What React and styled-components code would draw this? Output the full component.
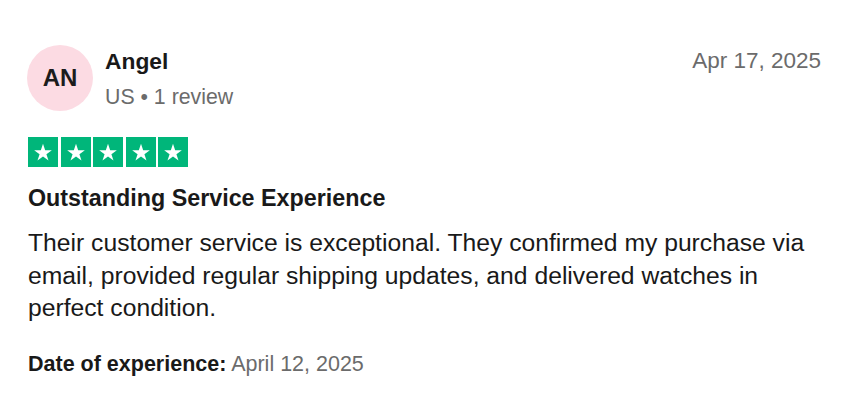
import styled, { createGlobalStyle } from "styled-components";

const GlobalStyle = createGlobalStyle`
  body {
    margin: 0;
    background: #ffffff;
    font-family: "Liberation Sans", Arial, sans-serif;
    color: #191919;
  }
`;

const Card = styled.article`
  width: 852px;
  height: 400px;
  box-sizing: border-box;
  padding: 45px 31px 0 28px;
  display: flex;
  flex-direction: column;
`;

const Header = styled.header`
  display: flex;
  align-items: flex-start;
`;

const Avatar = styled.div`
  width: 66px;
  height: 66px;
  margin-left: -1px;
  border-radius: 50%;
  background: #fcdbe3;
  display: flex;
  align-items: center;
  justify-content: center;
  font-size: 24px;
  font-weight: 700;
  color: #1c1c1c;
  flex-shrink: 0;
`;

const Author = styled.div`
  margin-left: 12px;
  flex: 1;
  display: flex;
  flex-direction: column;
`;

const Name = styled.div`
  font-size: 22.8px;
  font-weight: 700;
  line-height: 30px;
  margin-top: 1px;
`;

const Meta = styled.div`
  font-size: 21.3px;
  color: #6b6b6b;
  line-height: 26px;
  margin-top: 8px;
`;

const DateText = styled.time`
  font-size: 22.5px;
  color: #6b6b6b;
  line-height: 30px;
  margin-top: 1px;
`;

const Stars = styled.div`
  display: flex;
  gap: 2.5px;
  margin-top: 26px;
`;

const StarBox = styled.div`
  width: 30px;
  height: 30px;
  background: #00b67a;
  display: flex;
  align-items: center;
  justify-content: center;
`;

const Title = styled.h2`
  margin: 16px 0 0;
  font-size: 23.3px;
  font-weight: 700;
  line-height: 30px;
`;

const Body = styled.p`
  margin: 14px 0 0;
  font-size: 24.7px;
  line-height: 32.5px;
  max-width: 790px;
`;

const Experience = styled.p`
  margin: 26px 0 0;
  font-size: 21.5px;
  line-height: 26px;
  color: #6b6b6b;

  strong {
    color: #191919;
    font-weight: 700;
  }
`;

const Star = () => (
  <StarBox>
    <svg width="20" height="20" viewBox="0 0 24 24">
      <path
        d="M12 2.2l2.6 7.6h8l-6.5 4.8 2.5 7.6L12 17.5l-6.6 4.7 2.5-7.6-6.5-4.8h8z"
        fill="#ffffff"
      />
    </svg>
  </StarBox>
);

const App = () => {
  return (
    <>
      <GlobalStyle />
      <Card>
        <Header>
          <Avatar>AN</Avatar>
          <Author>
            <Name>Angel</Name>
            <Meta>US • 1 review</Meta>
          </Author>
          <DateText>Apr 17, 2025</DateText>
        </Header>
        <Stars>
          {[1, 2, 3, 4, 5].map((n) => (
            <Star key={n} />
          ))}
        </Stars>
        <Title>Outstanding Service Experience</Title>
        <Body>
          Their customer service is exceptional. They confirmed my purchase via
          email, provided regular shipping updates, and delivered watches in
          perfect condition.
        </Body>
        <Experience>
          <strong>Date of experience:</strong> April 12, 2025
        </Experience>
      </Card>
    </>
  );
};

export default App;
